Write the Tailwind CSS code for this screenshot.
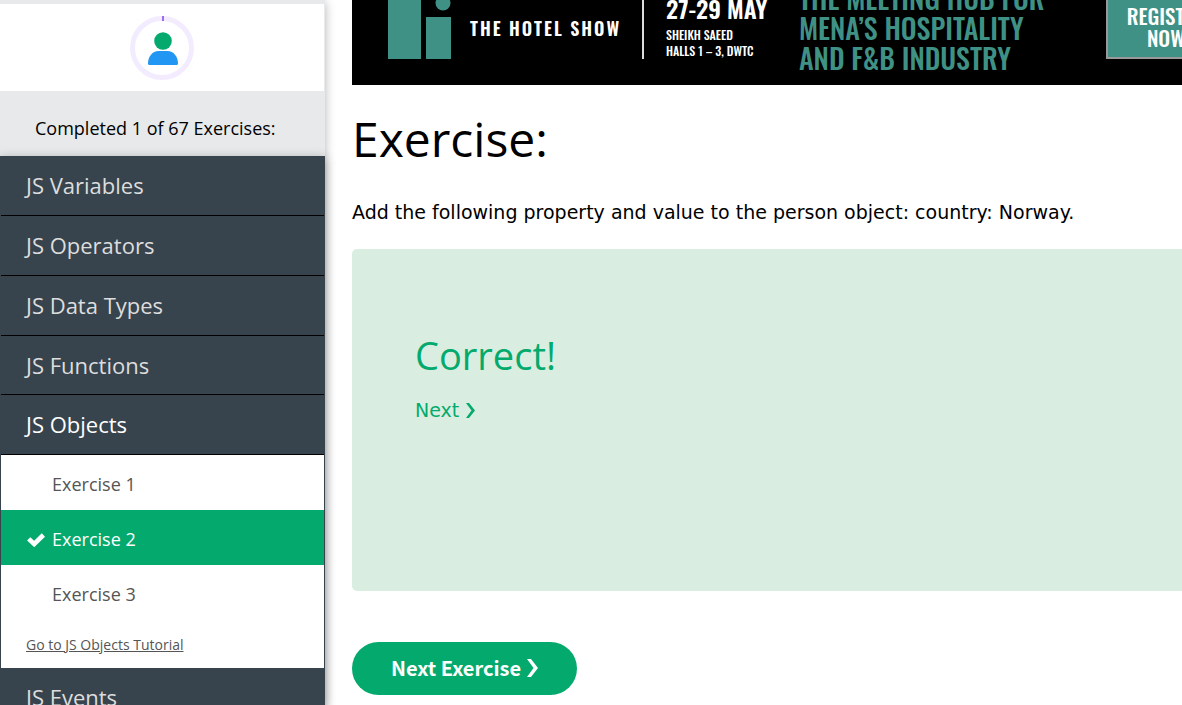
<!DOCTYPE html>
<html lang="en">
<head>
<meta charset="utf-8">
<meta name="viewport" content="width=device-width, initial-scale=1">
<title>JavaScript Exercises</title>
<script src="https://cdn.jsdelivr.net/npm/@tailwindcss/browser@4"></script>
</head>
<body class="flex h-screen overflow-hidden bg-white font-['Open_Sans','Noto_Sans',sans-serif] text-black">

<aside class="flex w-[325px] shrink-0 flex-col bg-[#e7e9eb] pt-1 shadow-[0_2px_10px_rgba(0,0,0,0.3)]">
  <div class="mr-px flex h-[87px] shrink-0 items-center justify-center bg-white">
    <svg class="size-16" viewBox="0 0 64 64" role="img" aria-label="Profile progress">
      <circle cx="32" cy="32" r="29.5" fill="none" stroke="#f3ecff" stroke-width="5"/>
      <path d="M33 0v5" stroke="#9b6cf5" stroke-width="2"/>
      <circle cx="33" cy="25" r="8.8" fill="#04aa6d"/>
      <path d="M18 47.500c0-7 4.500-12.500 10.500-12.500h9c6 0 10.500 5.500 10.500 12.500q0 1.500-1.500 1.500H19.500q-1.500 0-1.500-1.500z" fill="#2196f3"/>
    </svg>
  </div>
  <p class="flex h-[65px] shrink-0 items-center pt-2.5 pl-[35px] text-[18px]">Completed 1 of 67 Exercises:</p>

  <nav class="flex shrink-0 flex-col bg-[#38444d] px-px text-[22px] text-[#ddd] shadow-[0_2px_10px_rgba(0,0,0,0.3)]">
    <a href="#variables" class="flex h-[60px] items-center border-b border-black pl-[25px]">JS Variables</a>
    <a href="#operators" class="flex h-[60px] items-center border-b border-black pl-[25px]">JS Operators</a>
    <a href="#types" class="flex h-[60px] items-center border-b border-black pl-[25px]">JS Data Types</a>
    <a href="#functions" class="flex h-[59px] items-center border-b border-black pl-[25px]">JS Functions</a>
    <a href="#objects" class="flex h-[60px] items-center border-b border-black pl-[25px] text-white">JS Objects</a>
    <div class="bg-white text-[18px] text-[#555]">
      <a href="#ex1" class="flex h-[55px] items-center pt-1 pl-[51px]">Exercise 1</a>
      <a href="#ex2" class="flex h-[55px] items-center gap-[7px] bg-[#04aa6d] pt-1 pl-[26px] text-white">
        <svg class="h-[14px] w-[18px]" viewBox="0 0 18 14" fill="none" stroke="currentColor" stroke-width="4.600" aria-hidden="true"><path d="M1.700 5.800 7.200 11 16.400 2"/></svg>
        Exercise 2
      </a>
      <a href="#ex3" class="flex h-[55px] items-center pt-1 pl-[51px]">Exercise 3</a>
      <a href="#tutorial" class="flex h-12 items-center pl-[25px] text-[14px] underline">Go to JS Objects Tutorial</a>
    </div>
    <a href="#events" class="flex h-[60px] items-center border-b border-black pl-[25px]">JS Events</a>
  </nav>
</aside>

<main class="min-w-0 flex-1 pl-[27px]">
  <a href="#show" class="flex h-[85px] items-end overflow-hidden bg-black pb-[26px] pl-[35px] font-['Oswald','Liberation_Sans_Narrow',sans-serif] font-medium whitespace-nowrap text-white">
    <svg class="mr-[19px] h-[61px] w-16 shrink-0" viewBox="0 0 64 61" fill="#3f9185" aria-hidden="true"><path d="M1 0h33v61H1zM39 19h25v42H39z"/><circle cx="56" cy="5" r="7.500"/></svg>
    <span class="mr-5 w-[152px] shrink-0 pb-[18px] text-[18px] leading-[26px] font-semibold tracking-[2px]">THE HOTEL SHOW</span>
    <span class="mr-[22px] h-[60px] w-[2px] shrink-0 bg-[#ddd]"></span>
    <span class="w-[133px] shrink-0 text-[12px] leading-[16px]"><b class="block text-[24px] leading-[38px] font-semibold">27-29 MAY</b>SHEIKH SAEED<br>HALLS 1 – 3, DWTC</span>
    <span class="-mb-[14px] w-[307px] shrink-0 text-[28px] leading-[30px] text-[#3f9185]">THE MEETING HUB FOR<br>MENA’S HOSPITALITY<br>AND F&amp;B INDUSTRY</span>
    <span class="flex h-20 w-[120px] shrink-0 flex-col justify-end border-2 border-[#999] bg-[#3f9185] pb-2 text-center text-[21px] leading-[22px]">REGISTER<br>NOW</span>
  </a>

  <h1 class="mt-[19px] text-[48px] leading-[70px]">Exercise:</h1>
  <p class="mt-[23px] font-['DejaVu_Sans',sans-serif] text-[19px] leading-[30px]">Add the following property and value to the person object: country: Norway.</p>

  <section class="mt-[22px] h-[342px] rounded-l-[5px] bg-[#d9eee1] pt-[78px] pl-[63px] text-[#04aa6d]">
    <h2 class="text-[38px] leading-[56px]">Correct!</h2>
    <a href="#next" class="mt-3 flex w-fit items-center gap-[7px] font-['DejaVu_Sans',sans-serif] text-[19px] leading-[30px]">Next
      <svg class="h-[15px] w-[9px]" viewBox="0 0 9 15" fill="currentColor" aria-hidden="true"><path d="M0 0h3l6 7.500L3 15H0l5.500-7.500z"/></svg>
    </a>
  </section>

  <button type="button" class="mt-[51px] flex h-[53px] w-[225px] items-center justify-center gap-1.5 rounded-full bg-[#04aa6d] pb-0.5 font-['Noto_Sans_CJK_JP','Noto_Sans_CJK_SC',sans-serif] text-[20px] font-bold text-white">Next Exercise
    <svg class="h-[18px] w-[11px]" viewBox="0 0 11 18" fill="currentColor" aria-hidden="true"><path d="M0 0h4l7 9-7 9H0l6.500-9z"/></svg>
  </button>
</main>
</body>
</html>
